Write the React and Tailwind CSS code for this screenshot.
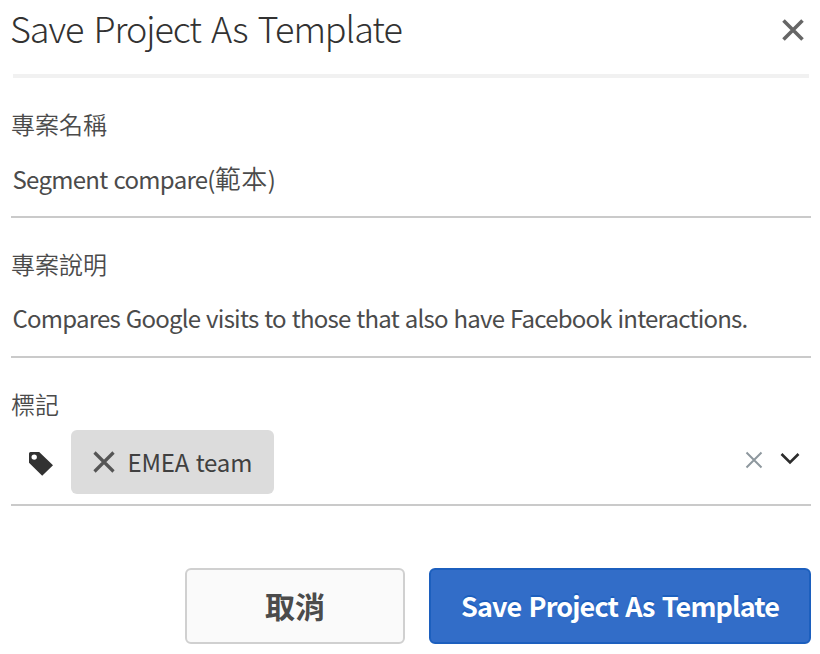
const font = 'font-["Noto_Sans_CJK_TC","Noto_Sans",sans-serif]';

function Cross({ size, width, className }) {
  return (
    <svg width={size} height={size} viewBox={`0 0 ${size} ${size}`} className={className} fill="none" stroke="currentColor" strokeWidth={width} aria-hidden="true">
      <path d={`M1.5 1.5L${size - 1.5} ${size - 1.5}M${size - 1.5} 1.5L1.5 ${size - 1.5}`} />
    </svg>
  );
}

function Field({ label, children }) {
  return (
    <div className="h-[140px] border-b-2 border-[#cacaca] pt-[28px]">
      <label className="block h-9 text-[24px] leading-9 font-[350] whitespace-nowrap">{label}</label>
      <div className="mt-[18px] h-9 pl-[1.5px] leading-9 whitespace-nowrap">{children}</div>
    </div>
  );
}

export default function App() {
  return (
    <main className={`${font} h-[654px] w-[820px] overflow-hidden bg-white px-[11px] pr-[9px] text-[#4b4b4b]`}>
      <header className="mx-[2px] flex h-[78px] justify-between border-b-4 border-[#f1f1f1]">
        <h1 className="-ml-[3px] h-[54px] text-[36px] leading-[54px] font-light tracking-[-1.05px] [word-spacing:3.2px] whitespace-nowrap text-[#323232]">Save Project As Template</h1>
        <button aria-label="Close" className="mt-[19px] mr-[5px] h-[22px] w-[22px] text-[#666]">
          <Cross size={22} width={3.6} />
        </button>
      </header>
      <Field label="專案名稱">
        <span className="text-[24px] tracking-[-0.72px] [word-spacing:1.4px]">Segment compare(<span className="text-[26px] font-[350] tracking-[0.5px]">範本</span>)</span>
      </Field>
      <Field label="專案說明">
        <span className="text-[24px] tracking-[-0.78px] [word-spacing:1.2px]">Compares Google visits to those that also have Facebook interactions.</span>
      </Field>
      <section className="h-[148px] border-b-2 border-[#cacaca] pt-[28px]">
        <label className="block h-9 text-[24px] leading-9 font-[350]">標記</label>
        <div className="mt-[8px] flex h-16">
          <svg width="26" height="26" viewBox="0 0 26 26" className="mt-[21px] ml-[17px] shrink-0 text-[#323232]" aria-hidden="true">
            <path fill="currentColor" fillRule="evenodd" d="M2.5 1H11.2L25 14.2L14.2 24.8L1 11.8V2.5Q1 1 2.5 1ZM6.2 3.4A2.7 2.7 0 1 0 6.2 8.8A2.7 2.7 0 1 0 6.2 3.4Z" />
          </svg>
          <div className="ml-[17px] flex h-16 w-[203px] shrink-0 items-center rounded-[6px] bg-[#dcdcdc] pl-[21.5px] text-[#404040]">
            <Cross size={22} width={3.2} className="shrink-0 text-[#555]" />
            <span className="ml-[13px] text-[24px] leading-9 tracking-[-0.2px] [word-spacing:1.4px] whitespace-nowrap">EMEA team</span>
          </div>
          <div className="ml-auto flex">
            <Cross size={18} width={2} className="mt-[21px] text-[#8e989e]" />
            <svg width="20" height="14" viewBox="0 0 20 14" className="mt-[22px] mr-[11px] ml-[17px]" fill="none" stroke="#2c2c2c" strokeWidth="2.6" aria-hidden="true">
              <path d="M1.5 2L10 10.5L18.5 2" />
            </svg>
          </div>
        </div>
      </section>
      <footer className="mt-[62px] flex justify-end gap-6 font-bold">
        <button className="h-[76px] w-[220px] rounded-[6px] border-2 border-[#d0d0d0] bg-[#fafafa] pb-[2px] text-[30px] leading-10">取消</button>
        <button className="h-[76px] w-[382px] rounded-[6px] border-2 border-[#1c5fbe] bg-[#326dc8] text-[27px] leading-10 tracking-[-0.88px] [word-spacing:2px] whitespace-nowrap text-white [text-shadow:0_-2px_0_#1c5fbe]">Save Project As Template</button>
      </footer>
    </main>
  );
}
